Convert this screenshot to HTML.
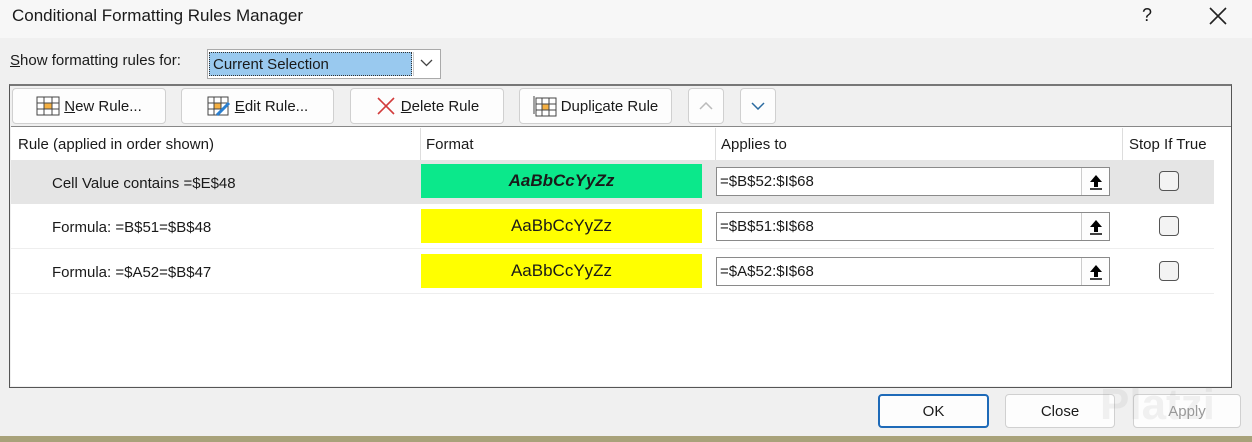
<!DOCTYPE html>
<html><head><meta charset="utf-8"><style>
*{box-sizing:border-box;margin:0;padding:0}
body{width:1252px;height:442px;overflow:hidden;background:#f0f0f0;font-family:"Liberation Sans",sans-serif;font-size:15px;color:#1a1a1a;position:relative}
.a{position:absolute}
.btn{position:absolute;background:#fdfdfd;border:1px solid #d0d0d0;border-radius:4px;display:flex;align-items:center;justify-content:center;gap:4px;font-size:15px}
.cell{position:absolute;font-size:15px}
.fmt{position:absolute;left:421px;width:281px;height:34px;display:flex;align-items:center;justify-content:center;font-size:17px}
.inp{position:absolute;left:716px;width:394px;height:29px;background:#fff;border:1px solid #8a8a8a;font-size:15px;padding:5px 3px}
.inp .up{position:absolute;right:0;top:0;width:28px;height:27px;border-left:1px solid #ccc;background:#fdfdfd;display:flex;align-items:center;justify-content:center}
.cb{position:absolute;left:1159px;width:20px;height:20px;border:1px solid #555;border-radius:4px;background:#f3f3f3}
u{text-decoration:underline}
</style></head><body>
<div class="a" style="left:0;top:0;width:1252px;height:38px;background:#f7f7f7"></div>
<div class="a" style="left:12px;top:6px;font-size:17px">Conditional Formatting Rules Manager</div>
<div class="a" style="left:1142px;top:5px;font-size:18px">?</div>
<svg class="a" style="left:1209px;top:7px" width="18" height="18"><path d="M1 1L17 17M17 1L1 17" stroke="#222" stroke-width="1.6"/></svg>
<div class="a" style="left:10px;top:52px"><u>S</u>how formatting rules for:</div>
<div class="a" style="left:207px;top:49px;width:234px;height:30px;background:#fff;border:1px solid #aaa"></div>
<div class="a" style="left:209px;top:52px;width:203px;height:24px;background:#99c9ef;border:1px dotted #333;padding:3px 3px">Current Selection</div>
<div class="a" style="left:413px;top:52px;width:26px;height:24px;border-left:1px solid #ccc"></div>
<svg class="a" style="left:420px;top:59px" width="13" height="8"><path d="M1 1L6.5 6.5L12 1" stroke="#444" fill="none" stroke-width="1.3"/></svg>
<div class="a" style="left:9px;top:84px;width:1223px;height:304px;border:1px solid #555;border-top:2px solid #777;background:#f0f0f0"></div>
<div class="btn" style="left:12px;top:88px;width:154px;height:36px"><svg width="24" height="20"><rect x="1" y="1" width="22" height="18" fill="#fff" stroke="#444"/><rect x="8" y="7" width="8" height="6" fill="#f5b042"/><path d="M1 7H23M1 13H23M8 1V19M16 1V19" stroke="#444"/></svg><span><u>N</u>ew Rule...</span></div>
<div class="btn" style="left:181px;top:88px;width:153px;height:36px"><svg width="24" height="20"><rect x="1" y="1" width="20" height="18" fill="#fff" stroke="#444"/><rect x="7" y="7" width="7" height="6" fill="#f5b042"/><path d="M1 7H21M1 13H14M7 1V19M14 1V13" stroke="#444"/><path d="M10 19L22 7" stroke="#2a7fd0" stroke-width="3"/></svg><span><u>E</u>dit Rule...</span></div>
<div class="btn" style="left:350px;top:88px;width:154px;height:36px"><svg width="22" height="22"><path d="M3 3L19 19M19 3L3 19" stroke="#d23b3b" stroke-width="1.6"/></svg><span><u>D</u>elete Rule</span></div>
<div class="btn" style="left:519px;top:88px;width:153px;height:36px"><svg width="24" height="22"><rect x="3" y="3" width="20" height="18" fill="#fff" stroke="#444"/><path d="M1 1V19" stroke="#444"/><rect x="9" y="9" width="7" height="6" fill="#f5b042"/><path d="M3 9H23M3 15H23M9 3V21M16 3V21" stroke="#444"/></svg><span>Dupli<u>c</u>ate Rule</span></div>
<div class="btn" style="left:688px;top:88px;width:36px;height:36px"><svg width="14" height="8"><path d="M1 7L7 1L13 7" stroke="#bbb" fill="none" stroke-width="1.5"/></svg></div>
<div class="btn" style="left:740px;top:88px;width:36px;height:36px"><svg width="14" height="8"><path d="M1 1L7 7L13 1" stroke="#2a6aa0" fill="none" stroke-width="1.5"/></svg></div>
<div class="a" style="left:11px;top:126px;width:1220px;height:260px;background:#fff;border-top:1px solid #888"></div>
<div class="a" style="left:420px;top:128px;width:1px;height:32px;background:#ddd"></div>
<div class="a" style="left:715px;top:128px;width:1px;height:32px;background:#ddd"></div>
<div class="a" style="left:1122px;top:128px;width:1px;height:32px;background:#ddd"></div>
<div class="cell" style="left:18px;top:136px">Rule (applied in order shown)</div>
<div class="cell" style="left:426px;top:136px">Format</div>
<div class="cell" style="left:721px;top:136px">Applies to</div>
<div class="cell" style="left:1129px;top:136px">Stop If True</div>
<div class="a" style="left:11px;top:160px;width:1203px;height:44px;background:#e5e5e5"></div>
<div class="a" style="left:11px;top:248px;width:1203px;height:1px;background:#eee"></div>
<div class="a" style="left:11px;top:293px;width:1203px;height:1px;background:#eee"></div>
<div class="cell" style="left:52px;top:175px">Cell Value contains =$E$48</div>
<div class="fmt" style="top:164px;background:#0be88b;font-weight:bold;font-style:italic">AaBbCcYyZz</div>
<div class="inp" style="top:167px">=$B$52:$I$68<div class="up"><svg width="14" height="16"><path d="M7 1L13 8H9V13H5V8H1Z" fill="#000"/><path d="M1 15H13" stroke="#000" stroke-width="1.5"/></svg></div></div>
<div class="cb" style="top:171px"></div>
<div class="cell" style="left:52px;top:219px">Formula: =B$51=$B$48</div>
<div class="fmt" style="top:209px;background:#ffff00">AaBbCcYyZz</div>
<div class="inp" style="top:212px">=$B$51:$I$68<div class="up"><svg width="14" height="16"><path d="M7 1L13 8H9V13H5V8H1Z" fill="#000"/><path d="M1 15H13" stroke="#000" stroke-width="1.5"/></svg></div></div>
<div class="cb" style="top:216px"></div>
<div class="cell" style="left:52px;top:264px">Formula: =$A52=$B$47</div>
<div class="fmt" style="top:254px;background:#ffff00">AaBbCcYyZz</div>
<div class="inp" style="top:257px">=$A$52:$I$68<div class="up"><svg width="14" height="16"><path d="M7 1L13 8H9V13H5V8H1Z" fill="#000"/><path d="M1 15H13" stroke="#000" stroke-width="1.5"/></svg></div></div>
<div class="cb" style="top:261px"></div>
<div class="btn" style="left:878px;top:394px;width:111px;height:34px;border:2px solid #1e6ab8">OK</div>
<div class="btn" style="left:1005px;top:394px;width:110px;height:34px">Close</div>
<div class="btn" style="left:1133px;top:394px;width:108px;height:34px;color:#999">Apply</div>
<div class="a" style="left:1100px;top:380px;font-size:44px;color:rgba(150,150,150,0.12);font-weight:bold">Platzi</div>
<div class="a" style="left:0;top:436px;width:1252px;height:6px;background:#a8a27a"></div>
</body></html>
